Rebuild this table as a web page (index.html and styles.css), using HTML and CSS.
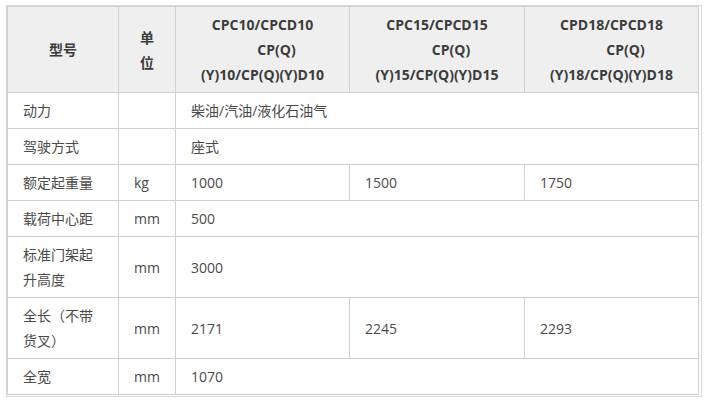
FILE: index.html
```html
<!DOCTYPE html>
<html lang="zh-CN">
<head>
<meta charset="utf-8">
<title>参数表</title>
<link rel="stylesheet" href="styles.css">
</head>
<body>
<div class="frame">
  <table class="spec">
    <colgroup>
      <col class="c-name">
      <col class="c-unit">
      <col class="c-val">
      <col class="c-val2">
      <col class="c-val">
    </colgroup>
    <thead>
      <tr>
        <th>型号</th>
        <th>单位</th>
        <th>CPC10/CPCD10<br><span class="shift">CP(Q)</span><br>(Y)10/CP(Q)(Y)D10</th>
        <th>CPC15/CPCD15<br><span class="shift">CP(Q)</span><br>(Y)15/CP(Q)(Y)D15</th>
        <th>CPD18/CPCD18<br><span class="shift">CP(Q)</span><br>(Y)18/CP(Q)(Y)D18</th>
      </tr>
    </thead>
    <tbody>
      <tr><td>动力</td><td></td><td colspan="3">柴油/汽油/液化石油气</td></tr>
      <tr><td>驾驶方式</td><td></td><td colspan="3">座式</td></tr>
      <tr><td>额定起重量</td><td>kg</td><td>1000</td><td>1500</td><td>1750</td></tr>
      <tr><td>载荷中心距</td><td>mm</td><td colspan="3">500</td></tr>
      <tr><td>标准门架起升高度</td><td>mm</td><td colspan="3">3000</td></tr>
      <tr><td>全长（不带货叉）</td><td>mm</td><td>2171</td><td>2245</td><td>2293</td></tr>
      <tr><td>全宽</td><td>mm</td><td colspan="3">1070</td></tr>
    </tbody>
  </table>
</div>
</body>
</html>
```
FILE: styles.css
```css
html, body {
  margin: 0;
  padding: 0;
  background: #fff;
}

body {
  padding: 5px 0 0 6px;
  font-family: "Open Sans", "Noto Sans CJK SC", sans-serif;
  font-size: 14px;
  color: #4a4a4a;
}

.frame {
  width: 693px;
  border: 1px solid #d9d9d9;
  padding: 0 1px 1px 0;
}

.spec {
  width: 692px;
  table-layout: fixed;
  border-collapse: collapse;
  border: 1px solid #cfcfcf;
}

.c-name { width: 111px; }
.c-unit { width: 57px; }
.c-val { width: 174px; }
.c-val2 { width: 175px; }

.spec th,
.spec td {
  border: 1px solid #cfcfcf;
  padding: 5px 15px;
  line-height: 25px;
  vertical-align: middle;
  word-break: break-all;
}

.spec th {
  background: #efefef;
  color: #3c3c3c;
  font-weight: bold;
  text-align: center;
  font-size: 14px;
}

.spec td {
  text-align: left;
}

.shift {
  padding-left: 28px;
}
```
